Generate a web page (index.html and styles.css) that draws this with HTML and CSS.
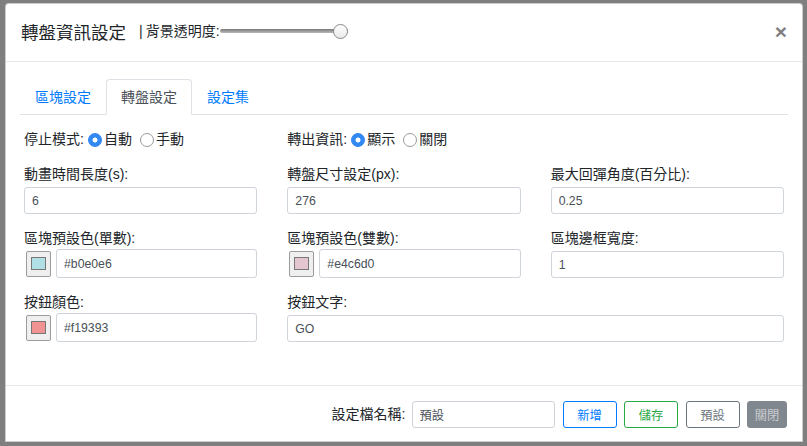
FILE: index.html
```html
<!DOCTYPE html>
<html lang="zh-Hant">
<head>
<meta charset="utf-8">
<title>轉盤資訊設定</title>
<link rel="stylesheet" href="styles.css">
</head>
<body>
<div class="modal">
  <header class="modal-header">
    <h5 class="modal-title">轉盤資訊設定</h5>
    <span class="opacity-label"><span class="bar">|</span>背景透明度:</span>
    <input type="range" class="range" min="0" max="100" value="100">
    <button class="close" type="button">×</button>
  </header>
  <div class="modal-body">
    <ul class="tabs">
      <li class="tab">區塊設定</li>
      <li class="tab active">轉盤設定</li>
      <li class="tab">設定集</li>
    </ul>
    <div class="pane">
      <div class="grid">
        <div class="radio-row">
          <span class="rlabel">停止模式:</span>
          <input type="radio" class="radio" name="stop" checked><span class="rtext">自動</span>
          <input type="radio" class="radio" name="stop"><span class="rtext">手動</span>
        </div>
        <div class="radio-row">
          <span class="rlabel">轉出資訊:</span>
          <input type="radio" class="radio" name="info" checked><span class="rtext">顯示</span>
          <input type="radio" class="radio" name="info"><span class="rtext">關閉</span>
        </div>
        <div></div>

        <div class="group">
          <label class="flabel">動畫時間長度(s):</label>
          <input class="field" type="text" value="6">
        </div>
        <div class="group">
          <label class="flabel">轉盤尺寸設定(px):</label>
          <input class="field" type="text" value="276">
        </div>
        <div class="group">
          <label class="flabel">最大回彈角度(百分比):</label>
          <input class="field" type="text" value="0.25">
        </div>

        <div class="group">
          <label class="flabel tight">區塊預設色(單數):</label>
          <div class="color-group">
            <span class="swatch"><span class="swatch-inner c-odd"></span></span>
            <input class="field tall" type="text" value="#b0e0e6">
          </div>
        </div>
        <div class="group">
          <label class="flabel tight">區塊預設色(雙數):</label>
          <div class="color-group">
            <span class="swatch"><span class="swatch-inner c-even"></span></span>
            <input class="field tall" type="text" value="#e4c6d0">
          </div>
        </div>
        <div class="group">
          <label class="flabel">區塊邊框寬度:</label>
          <input class="field" type="text" value="1">
        </div>

        <div class="group">
          <label class="flabel tight">按鈕顏色:</label>
          <div class="color-group">
            <span class="swatch"><span class="swatch-inner c-btn"></span></span>
            <input class="field tall" type="text" value="#f19393">
          </div>
        </div>
        <div class="group span2">
          <label class="flabel">按鈕文字:</label>
          <input class="field" type="text" value="GO">
        </div>
      </div>
    </div>
  </div>
  <footer class="modal-footer">
    <span class="name-label">設定檔名稱:</span>
    <input class="field name-field" type="text" value="預設">
    <button class="btn btn-blue" type="button">新增</button>
    <button class="btn btn-green" type="button">儲存</button>
    <button class="btn btn-gray" type="button">預設</button>
    <button class="btn btn-close" type="button">關閉</button>
  </footer>
</div>
</body>
</html>
```
FILE: styles.css
```css
html { font-size: 14px; }
* { box-sizing: border-box; }
body {
  margin: 0;
  padding: 3px 4px 4px 5px;
  background: #7f7f7f;
  font-family: "Liberation Sans", "Noto Sans CJK TC", sans-serif;
  color: #212529;
  font-size: 14px;
  line-height: 21px;
  height: 446px;
  overflow: hidden;
}
.modal {
  width: 798px;
  height: 439px;
  background: #fff;
  border: 1px solid rgba(0,0,0,0.2);
  border-radius: 4px 4px 0 0;
  display: flex;
  flex-direction: column;
}
.modal-header {
  height: 58px;
  flex: none;
  display: flex;
  align-items: center;
  padding: 0 15px 0 15px;
  border-bottom: 1px solid #e5e7ea;
}
.modal-title {
  margin: 0;
  font-size: 17.5px;
  font-weight: 400;
  line-height: 26px;
  margin-top: 1px;
}
.opacity-label {
  margin-left: 13px;
  font-size: 14px;
  margin-top: -2px;
}
.bar { margin-right: 3px; }
.range {
  -webkit-appearance: none;
  appearance: none;
  width: 128px;
  height: 16px;
  margin: 0 0 3px 0;
  background: transparent;
}
.range::-webkit-slider-runnable-track {
  height: 4px;
  background: linear-gradient(#7a7a7a, #b9b9b9);
  border-radius: 2px;
}
.range::-webkit-slider-thumb {
  -webkit-appearance: none;
  appearance: none;
  width: 15px;
  height: 15px;
  margin-top: -5.5px;
  border-radius: 50%;
  background: linear-gradient(#ffffff, #e9e9e9);
  border: 1px solid #8a8a8a;
}
.close {
  margin-left: auto;
  border: 0;
  background: none;
  padding: 0;
  font-family: "Liberation Sans", sans-serif;
  font-size: 21px;
  font-weight: 700;
  line-height: 1;
  color: #000;
  opacity: 0.5;
  margin-top: -2px;
}
.modal-body {
  flex: 1;
  padding: 17px 14px 0 14px;
}
.tabs {
  list-style: none;
  margin: 0;
  padding: 0;
  display: flex;
  border-bottom: 1px solid #dee2e6;
}
.tab {
  padding: 7px 14px 6px;
  line-height: 21px;
  border: 1px solid transparent;
  border-radius: 4px 4px 0 0;
  margin-bottom: -1px;
  color: #007bff;
}
.tab.active {
  color: #495057;
  border-color: #dee2e6 #dee2e6 #fff;
  background: #fff;
}
.pane {
  padding: 14px 4px 0;
}
.grid {
  display: grid;
  grid-template-columns: repeat(3, 1fr);
  column-gap: 30px;
  row-gap: 14px;
  align-items: end;
}
.radio-row {
  display: flex;
  align-items: center;
  height: 21px;
}
.rlabel { margin-right: 4px; }
.rtext { margin-left: 2px; margin-right: 8px; }
.radio {
  -webkit-appearance: none;
  appearance: none;
  margin: 0;
  width: 14px;
  height: 14px;
  border-radius: 50%;
  border: 1px solid #9a9a9a;
  background: #fff;
}
.radio:checked {
  border-color: #2f84f2;
  background: radial-gradient(circle, #fff 0 2.2px, #3389f4 2.8px);
}
.group {
  display: flex;
  flex-direction: column;
}
.span2 { grid-column: span 2; }
.flabel {
  line-height: 21px;
  margin-bottom: 2px;
}
.flabel.tight { margin-bottom: 0; }
.field {
  height: 27px;
  border: 1px solid #ced4da;
  border-radius: 3px;
  padding: 0 7px;
  font-family: "Liberation Sans", "Noto Sans CJK TC", sans-serif;
  font-size: 12.25px;
  color: #495057;
  background: #fff;
  width: 100%;
}
.field.tall { height: 29px; }
.color-group {
  display: flex;
  align-items: center;
  gap: 5px;
  padding-left: 2px;
}
.swatch {
  flex: none;
  width: 25px;
  height: 26px;
  border: 1px solid #9c9c9c;
  border-radius: 2px;
  background: #efefef;
  display: flex;
  align-items: center;
  justify-content: center;
}
.swatch-inner {
  width: 15px;
  height: 13px;
  border: 1px solid #777;
}
.c-odd { background: #b0e0e6; }
.c-even { background: #e4c6d0; }
.c-btn { background: #f19393; }
.modal-footer {
  flex: none;
  border-top: 1px solid #e5e7ea;
  padding: 15px 15px 13px;
  display: flex;
  justify-content: flex-end;
  align-items: center;
}
.name-label { margin-right: 6px; }
.name-field {
  width: 143px;
  flex: none;
  margin-right: 8px;
}
.btn {
  flex: none;
  width: 54px;
  height: 27px;
  padding: 0;
  font-family: "Liberation Sans", "Noto Sans CJK TC", sans-serif;
  font-size: 12.25px;
  background: #fff;
  border-radius: 3px;
  border: 1px solid;
  margin-left: 7.5px;
}
.btn-blue { color: #007bff; border-color: #007bff; margin-left: 0; }
.btn-green { color: #28a745; border-color: #28a745; }
.btn-gray { color: #6c757d; border-color: #6c757d; }
.btn-close {
  width: 40px;
  background: #80878e;
  border-color: #80878e;
  color: #c9ccd0;
}
```
